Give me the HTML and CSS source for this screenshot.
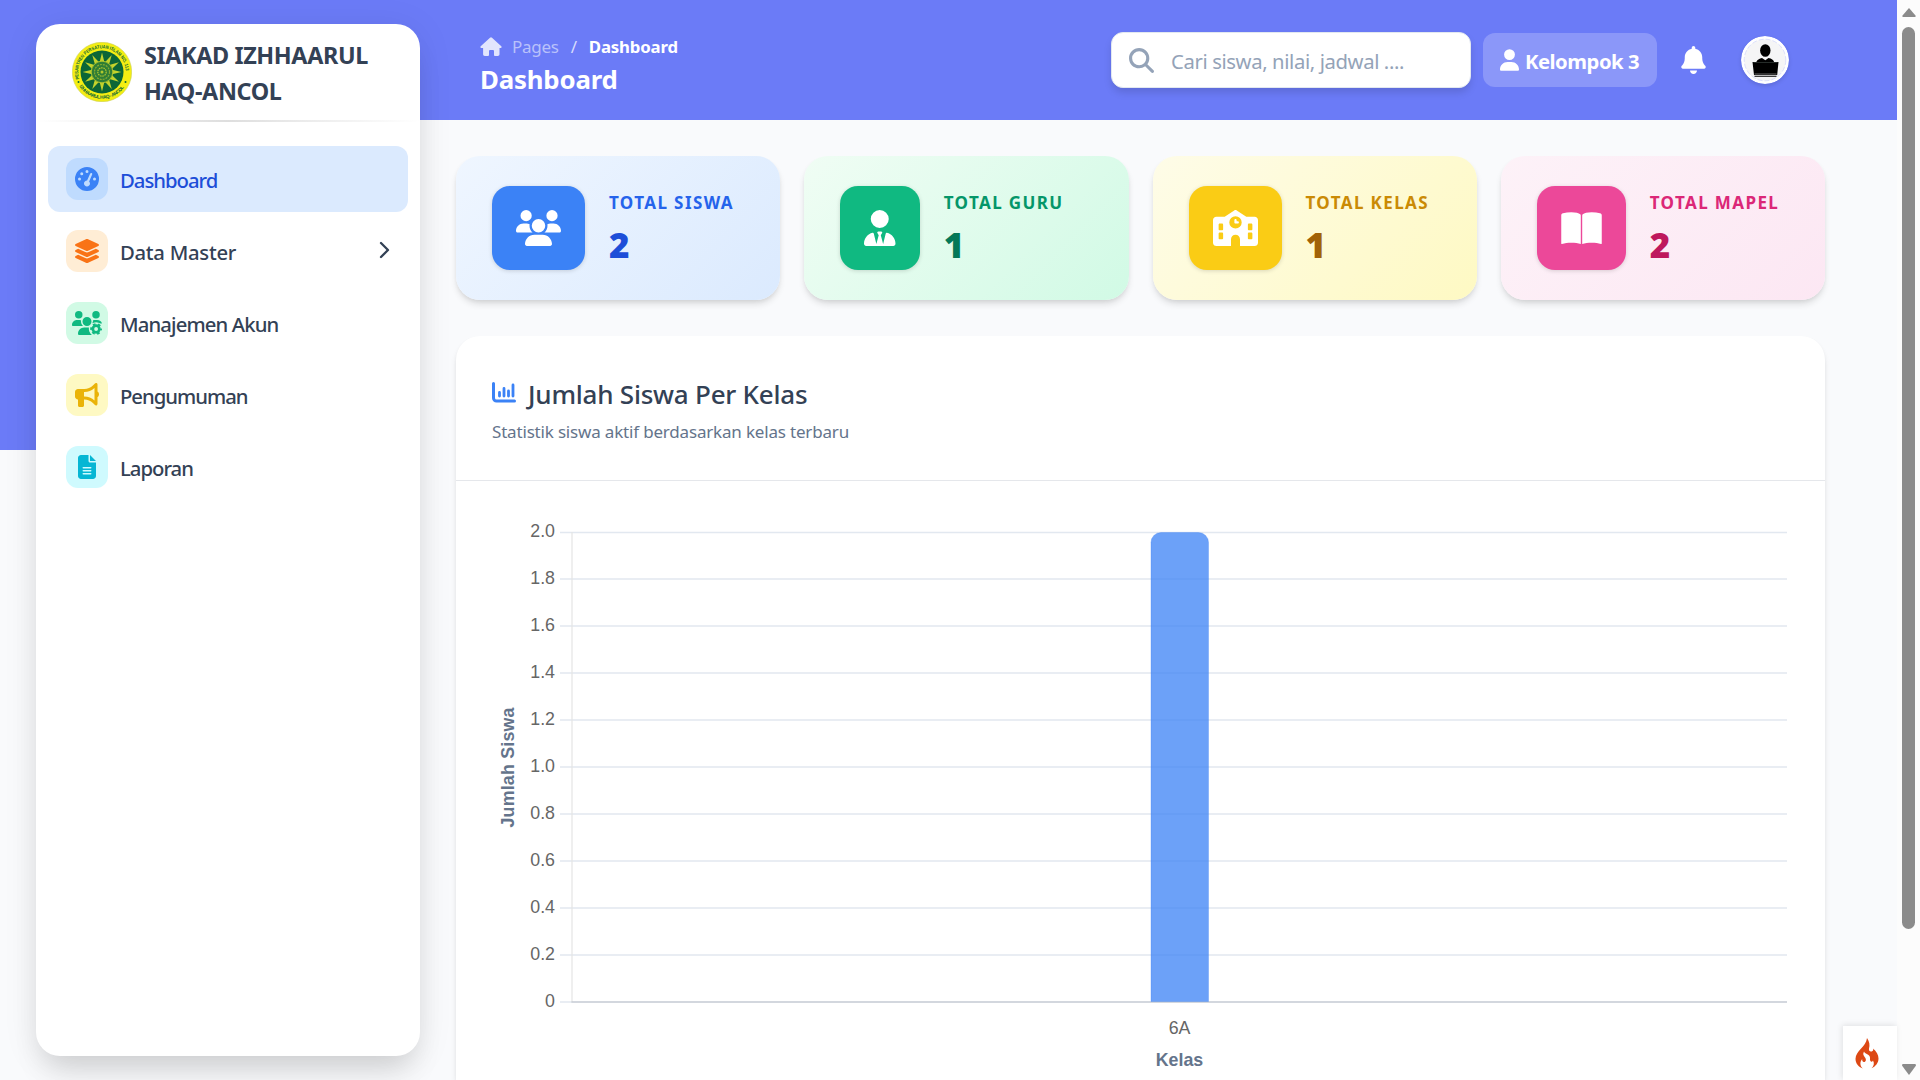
FILE: index.html
```html
<!DOCTYPE html>
<html lang="id">
<head>
<meta charset="utf-8">
<title>Dashboard</title>
<link rel="stylesheet" href="styles.css">
</head>
<body>
<div class="app">
  <aside class="sidebar">
    <div class="brand">
      <svg class="brand-logo" viewBox="0 0 60 60">
        <defs>
          <path id="ringTop" d="M7.2 37A23.8 23.8 0 1 1 52.8 37"/>
          <path id="ringBottom" d="M5.8 41.5A26.8 26.8 0 0 0 54.2 41.5"/>
        </defs>
        <circle cx="30" cy="30" r="29.7" fill="#f4ee12" stroke="#c9cf5a" stroke-width=".6"/>
        <circle cx="30" cy="30" r="21.5" fill="#0b6637"/>
        <g fill="#c3d32c">
          <path d="M30 10.5l2.6 10.5h-5.2zM30 49.500l2.600-10.500h-5.200zM10.500 30l10.500-2.600v5.200zM49.500 30l-10.500-2.600v5.200z"/>
          <path transform="rotate(30 30 30)" d="M30 10.500l2.600 10.500h-5.200zM30 49.500l2.600-10.500h-5.200zM10.500 30l10.500-2.600v5.200zM49.500 30l-10.500-2.600v5.200z"/>
          <path transform="rotate(60 30 30)" d="M30 10.500l2.600 10.500h-5.200zM30 49.500l2.600-10.500h-5.200zM10.500 30l10.500-2.600v5.200zM49.500 30l-10.500-2.600v5.200z"/>
        </g>
        <circle cx="30" cy="30" r="10.800" fill="#2f7d35" stroke="#a9c22e" stroke-width="1"/>
        <circle cx="30" cy="30" r="7.500" fill="none" stroke="#86ab30" stroke-width="1.200" stroke-dasharray="2 1"/>
        <circle cx="30" cy="30" r="4.200" fill="none" stroke="#b4c82e" stroke-width="1.200" stroke-dasharray="1.500 .8"/>
        <circle cx="30" cy="30" r="1.500" fill="#b4c82e"/>
        <circle cx="6.500" cy="40" r="1" fill="#0b6637"/><circle cx="53.500" cy="40" r="1" fill="#0b6637"/>
        <text class="ring-text"><textPath href="#ringTop" textLength="80" lengthAdjust="spacingAndGlyphs">PESANTREN PERSATUAN ISLAM NO. 113</textPath></text>
        <text class="ring-text"><textPath href="#ringBottom" startOffset="3" textLength="53">IZHHAARUL HAQ - ANCOL</textPath></text>
      </svg>
      <div class="brand-name">SIAKAD IZHHAARUL<br>HAQ-ANCOL</div>
    </div>
    <div class="divider"></div>
    <nav class="menu">
      <a class="item active"><span class="chip blue"><svg width="24" height="24" viewBox="0 0 512 512"><path d="M0 256a256 256 0 1 1 512 0A256 256 0 1 1 0 256zM288 96a32 32 0 1 0 -64 0 32 32 0 1 0 64 0zM256 416c35.300 0 64-28.700 64-64c0-17.400-6.900-33.100-18.100-44.600L366 161.700c5.300-12.100-.2-26.300-12.300-31.600s-26.300 .2-31.600 12.300L257.900 288c-.6 0-1.300 0-1.900 0c-35.300 0-64 28.700-64 64s28.700 64 64 64zM176 144a32 32 0 1 0 -64 0 32 32 0 1 0 64 0zM96 288a32 32 0 1 0 0-64 32 32 0 1 0 0 64zm352-32a32 32 0 1 0 -64 0 32 32 0 1 0 64 0z"/></svg></span><span class="label">Dashboard</span></a>
      <a class="item"><span class="chip orange"><svg width="24" height="24" viewBox="32 0 512 512"><path d="M264.500 5.200c14.900-6.900 32.100-6.900 47 0l218.600 101c8.500 3.900 13.900 12.400 13.900 21.800s-5.400 17.900-13.900 21.800l-218.600 101c-14.900 6.900-32.100 6.900-47 0L45.900 149.800C37.400 145.800 32 137.300 32 128s5.400-17.900 13.900-21.800L264.500 5.200zM476.900 209.600l53.200 24.600c8.500 3.900 13.900 12.400 13.900 21.800s-5.400 17.900-13.900 21.800l-218.600 101c-14.900 6.900-32.100 6.900-47 0L45.900 277.800C37.400 273.800 32 265.300 32 256s5.400-17.900 13.900-21.800l53.200-24.600 152 70.200c23.400 10.800 50.400 10.800 73.800 0l152-70.200zm-152 198.200l152-70.200 53.200 24.600c8.500 3.900 13.900 12.400 13.900 21.800s-5.400 17.900-13.900 21.800l-218.600 101c-14.900 6.900-32.100 6.900-47 0L45.900 405.800C37.400 401.800 32 393.300 32 384s5.400-17.900 13.900-21.800l53.200-24.600 152 70.200c23.400 10.800 50.400 10.800 73.800 0z"/></svg></span><span class="label label-wide">Data Master</span><svg class="chevron" width="12" height="18" viewBox="0 0 12 18"><path d="M2 2l7 7-7 7"/></svg></a>
      <a class="item"><span class="chip green"><svg width="30" height="24" viewBox="0 0 640 512"><path d="M144 0a80 80 0 1 1 0 160A80 80 0 1 1 144 0zM512 0a80 80 0 1 1 0 160A80 80 0 1 1 512 0zM0 298.700C0 239.800 47.800 192 106.700 192h42.700c15.900 0 31 3.500 44.600 9.700c-1.300 7.200-1.900 14.700-1.900 22.300c0 38.200 16.800 72.500 43.300 96H21.300C9.600 320 0 310.400 0 298.700zM446 201.700c13.600-6.300 28.700-9.700 44.600-9.700h42.700C592.200 192 630 225 640 265L430 262C447 240 448 224 446 201.700zM224 224a96 96 0 1 1 192 0 96 96 0 1 1 -192 0zM128 485.300C128 411.700 187.700 352 261.300 352H360C352 410 375 470 425 512H154.700c-14.700 0-26.700-11.900-26.700-26.700z"/><circle class="gear-gap" cx="514" cy="384" r="142"/><circle class="gear-body" cx="514" cy="384" r="70"/><circle class="gear-teeth" cx="514" cy="384" r="105"/></svg></span><span class="label label-mid">Manajemen Akun</span></a>
      <a class="item"><span class="chip yellow"><svg width="24" height="24" viewBox="0 0 512 512"><path d="M480 32c0-12.900-7.800-24.600-19.800-29.600s-25.700-2.200-34.900 6.900L381.700 53c-48 48-113.100 75-181 75H192 160 64c-35.300 0-64 28.700-64 64v96c0 35.300 28.700 64 64 64l0 128c0 17.700 14.300 32 32 32h64c17.700 0 32-14.300 32-32V352l8.700 0c67.900 0 133 27 181 75l43.600 43.600c9.200 9.200 22.900 11.900 34.900 6.900s19.800-16.600 19.800-29.600V300.400c18.600-8.800 32-32.500 32-60.400s-13.400-51.600-32-60.400V32zm-64 76.700V240 371.300C357.200 317.800 280.500 288 200.700 288H192V192h8.700c79.800 0 156.500-29.800 215.300-83.300z"/></svg></span><span class="label">Pengumuman</span></a>
      <a class="item"><span class="chip cyan"><svg width="18" height="24" viewBox="0 0 384 512"><path d="M64 0C28.700 0 0 28.700 0 64V448c0 35.300 28.700 64 64 64H320c35.300 0 64-28.700 64-64V160H256c-17.700 0-32-14.300-32-32V0H64zM256 0V128H384L256 0zM112 256H272c8.800 0 16 7.200 16 16s-7.200 16-16 16H112c-8.800 0-16-7.200-16-16s7.200-16 16-16zm0 64H272c8.800 0 16 7.200 16 16s-7.200 16-16 16H112c-8.800 0-16-7.200-16-16s7.200-16 16-16zm0 64H272c8.800 0 16 7.200 16 16s-7.200 16-16 16H112c-8.800 0-16-7.200-16-16s7.200-16 16-16z"/></svg></span><span class="label">Laporan</span></a>
    </nav>
  </aside>

  <main class="main">
    <header class="topbar">
      <div class="heading">
        <div class="crumbs">
          <svg width="22" height="20" viewBox="0 0 22 20"><path d="M10 .8a1.400 1.400 0 0 1 2 0l9.300 8.400c.6.700.2 1.800-.8 1.800h-1v6.300c0 1-.8 1.700-1.700 1.700h-2.600c-.8 0-1.200-.6-1.200-1.300v-3.400c0-.8-.5-1.300-1.300-1.300h-2.400c-.8 0-1.300.5-1.300 1.300v3.400c0 .7-.5 1.300-1.300 1.300H4.800c-1 0-1.700-.7-1.700-1.700V11H1.500C.5 11 .1 9.900.7 9.200z"/></svg>
          <span class="crumb-parent">Pages</span><span class="crumb-sep">/</span><b>Dashboard</b>
        </div>
        <h1>Dashboard</h1>
      </div>
      <div class="search"><svg width="25" height="25" viewBox="0 0 512 512"><path d="M416 208c0 45.900-14.900 88.300-40 122.700L502.600 457.400c12.500 12.500 12.500 32.800 0 45.300s-32.800 12.500-45.300 0L330.700 376c-34.400 25.200-76.800 40-122.700 40C93.100 416 0 322.900 0 208S93.100 0 208 0S416 93.100 416 208zM208 352a144 144 0 1 0 0-288 144 144 0 1 0 0 288z"/></svg><span>Cari siswa, nilai, jadwal ....</span></div>
      <div class="user"><svg width="19" height="22" viewBox="0 0 448 512"><path d="M224 256A128 128 0 1 0 224 0a128 128 0 1 0 0 256zm-45.700 48C79.800 304 0 383.800 0 482.300C0 498.700 13.300 512 29.700 512H418.300c16.400 0 29.700-13.300 29.700-29.700C448 383.800 368.200 304 269.700 304H178.300z"/></svg><span>Kelompok 3</span></div>
      <svg class="bell" width="25" height="28" viewBox="0 0 448 512"><path d="M224 0c-17.700 0-32 14.300-32 32V51.200C119 66 64 130.600 64 208v18.800c0 47-17.300 92.400-48.500 127.600l-7.400 8.300c-8.400 9.400-10.400 22.900-5.300 34.400S19.400 416 32 416H416c12.600 0 24-7.400 29.200-18.900s3.100-25-5.300-34.400l-7.400-8.300C401.300 319.200 384 273.900 384 226.800V208c0-77.400-55-142-128-156.800V32c0-17.700-14.300-32-32-32zm45.300 493.300c12-12 18.700-28.300 18.700-45.300H224 160c0 17 6.700 33.300 18.700 45.300s28.300 18.700 45.300 18.700s33.300-6.700 45.300-18.700z"/></svg>
      <svg class="avatar" width="48" height="48" viewBox="0 0 48 48"><circle cx="24" cy="24" r="24" fill="#fff"/><circle cx="24" cy="24" r="20.800" fill="#f5f5f6" stroke="#d3d8fb" stroke-width=".8" stroke-dasharray="5 2"/><ellipse cx="24.300" cy="14.500" rx="5.200" ry="6.300"/><path d="M15 27c1-3.500 3.500-4.500 6-5l3.300 2.200L27.500 22c3 .5 5 1.500 6 5z"/><path d="M11.500 26h26l-1.300 13H13zM13.500 39.800h22v1h-22z"/><path d="M12.500 26.500h24" stroke="#3f4a45" stroke-width=".6"/><path d="M13.500 38h22" stroke="#aaa" stroke-width=".6"/></svg>
    </header>

    <section class="content">
      <div class="stats">
        <article class="stat s-blue"><div class="tile"><svg width="45" height="36" viewBox="0 0 640 512"><path d="M144 0a80 80 0 1 1 0 160A80 80 0 1 1 144 0zM512 0a80 80 0 1 1 0 160A80 80 0 1 1 512 0zM0 298.700C0 239.800 47.800 192 106.700 192h42.700c15.900 0 31 3.500 44.600 9.700c-1.300 7.200-1.900 14.700-1.900 22.300c0 38.200 16.800 72.500 43.300 96c-.2 0-.4 0-.7 0H21.300C9.600 320 0 310.400 0 298.700zM405.300 320c-.2 0-.4 0-.7 0c26.600-23.500 43.300-57.800 43.300-96c0-7.600-.7-15-1.900-22.300c13.600-6.300 28.700-9.700 44.600-9.700h42.700C592.200 192 640 239.800 640 298.700c0 11.800-9.600 21.300-21.300 21.300H405.300zM224 224a96 96 0 1 1 192 0 96 96 0 1 1 -192 0zM128 485.300C128 411.700 187.700 352 261.300 352H378.700C452.300 352 512 411.700 512 485.300c0 14.700-11.900 26.700-26.700 26.700H154.700c-14.700 0-26.700-11.900-26.700-26.700z"/></svg></div><div class="figures"><h2>TOTAL SISWA</h2><p>2</p></div></article>
        <article class="stat s-green"><div class="tile"><svg width="31.500" height="36" viewBox="0 0 448 512"><path d="M96 128a128 128 0 1 0 256 0A128 128 0 1 0 96 128zm94.500 200.200l18.600 31L175.800 483.100l-36-146.900c-2-8.100-9.800-13.400-17.900-11.300C51.900 342.400 0 405.800 0 481.300c0 17 13.800 30.700 30.700 30.700H162.500c0 0 0 0 .1 0H168 280h5.500c0 0 0 0 .1 0H417.300c17 0 30.700-13.800 30.700-30.700c0-75.500-51.900-138.900-121.900-156.400c-8.100-2-15.900 3.300-17.900 11.300l-36 146.900L238.900 359.200l18.600-31c6.400-10.700-1.300-24.200-13.700-24.200H224 204.300c-12.400 0-20.100 13.600-13.700 24.200z"/></svg></div><div class="figures"><h2>TOTAL GURU</h2><p>1</p></div></article>
        <article class="stat s-yellow"><div class="tile"><svg width="45" height="36" viewBox="0 0 640 512"><path fill-rule="evenodd" d="M337.800 5.400C327-1.800 313-1.800 302.200 5.400L166.300 96H48C21.500 96 0 117.500 0 144V464c0 26.500 21.500 48 48 48H256V416c0-35.300 28.700-64 64-64s64 28.700 64 64v96H592c26.500 0 48-21.500 48-48V144c0-26.500-21.500-48-48-48H473.700L337.800 5.400zM96 192h32c8.800 0 16 7.200 16 16v64c0 8.800-7.200 16-16 16H96c-8.800 0-16-7.200-16-16V208c0-8.800 7.200-16 16-16zm400 16c0-8.800 7.200-16 16-16h32c8.800 0 16 7.200 16 16v64c0 8.800-7.200 16-16 16H512c-8.800 0-16-7.200-16-16V208zM96 320h32c8.800 0 16 7.200 16 16v64c0 8.800-7.200 16-16 16H96c-8.800 0-16-7.200-16-16V336c0-8.800 7.200-16 16-16zm400 16c0-8.800 7.200-16 16-16h32c8.800 0 16 7.200 16 16v64c0 8.800-7.200 16-16 16H512c-8.800 0-16-7.200-16-16V336zM232 176a88 88 0 1 1 176 0 88 88 0 1 1 -176 0zm88-48c-8.800 0-16 7.200-16 16v32c0 8.800 7.200 16 16 16h32c8.800 0 16-7.200 16-16s-7.200-16-16-16H336V144c0-8.800-7.200-16-16-16z"/></svg></div><div class="figures"><h2>TOTAL KELAS</h2><p>1</p></div></article>
        <article class="stat s-pink"><div class="tile"><svg width="41" height="36" viewBox="0 0 576 512"><path d="M0 76C0 58 8 52 25 47C60 37 100 32 144 32C205 32 250 44 270 62C276 67 278 72 278 80V484C240 470 195 464 144 464C90 464 50 472 10 482C3 484 0 482 0 476zM576 76C576 58 568 52 551 47C516 37 476 32 432 32C371 32 326 44 306 62C300 67 298 72 298 80V484C336 470 381 464 432 464C486 464 526 472 566 482C573 484 576 482 576 476z"/></svg></div><div class="figures"><h2>TOTAL MAPEL</h2><p>2</p></div></article>
      </div>

      <article class="panel">
        <div class="panel-head">
          <div class="panel-title"><svg width="24" height="21" viewBox="0 0 24 21"><path d="M1.500 1.500v14.500a3 3 0 0 0 3 3h18" stroke-width="3"/><path d="M7.500 10.500v3.500M12 6.500v7.500M16.500 9v5M21 3v11" stroke-width="2.800"/></svg><h2>Jumlah Siswa Per Kelas</h2></div>
          <p>Statistik siswa aktif berdasarkan kelas terbaru</p>
        </div>
        <svg class="chart" width="1369" height="599" viewBox="456 481 1369 599">
          <g class="grid"><path d="M560 532.500H1787M560 579H1787M560 626H1787M560 673H1787M560 720H1787M560 767H1787M560 814H1787M560 861H1787M560 908H1787M560 955H1787M560 1002H572"/></g>
          <path d="M572 532V1002" stroke="#e5e5e5" stroke-width="1.200"/>
          <path d="M571.500 1002H1787" stroke="#c5cad3" stroke-width="1.500"/>
          <path class="bar" d="M1151 1001.500V542.500a10 10 0 0 1 10-10h37.500a10 10 0 0 1 10 10v459z"/>
          <g class="ticks">
            <text x="555" y="537">2.0</text><text x="555" y="584">1.8</text><text x="555" y="631">1.6</text><text x="555" y="678">1.4</text><text x="555" y="725">1.2</text><text x="555" y="772">1.0</text><text x="555" y="818.500">0.8</text><text x="555" y="865.500">0.6</text><text x="555" y="912.500">0.4</text><text x="555" y="959.500">0.2</text><text x="555" y="1006.500">0</text>
          </g>
          <text class="tick-x" x="1179.500" y="1034">6A</text>
          <text class="axis" x="1179.500" y="1066">Kelas</text>
          <text class="axis" transform="translate(514 767.500) rotate(-90)" textLength="120">Jumlah Siswa</text>
        </svg>
      </article>
    </section>
  </main>

  <div class="scrollbar"><svg width="14" height="9" viewBox="0 0 14 9"><path d="M7 0l6.500 7.500c.5.800 0 1.500-.8 1.500H1.300C.5 9 0 8.300.5 7.500z"/></svg><div class="thumb"></div><svg width="14" height="11" viewBox="0 0 14 11"><path d="M7 11L.3 2C-.3 1 .3 0 1.300 0h11.400c1 0 1.600 1 1 2z"/></svg></div>
  <div class="debug-tool"><svg width="24" height="31" viewBox="0 0 24 31"><path d="M12 0C14.500 3.500 15 7 14 10.500C13.500 13 15.500 14.500 17.500 13C18.500 12.300 18.300 11 18 10.500C21.500 13 23.500 17 23.500 20.500C23.500 25 20.500 28.500 16.500 30.300C19 28 19.500 25 18 22.500C17.200 24 16 24 15.300 22.800C14.500 21 16 19 13.500 17C11 15 9.500 15.500 9 13.500C7.500 16 8.500 17.500 10 19.500C11.500 21.500 11 24 9 24C7.500 24 7 22.500 7.200 21C4.500 24 5 28 7.800 30.500C3.500 29 .5 25.500 .5 20.800C.5 12.500 11 9.500 12 0z"/></svg></div>
</div>
</body>
</html>
```
FILE: styles.css
```css
* { box-sizing: border-box; margin: 0; }

body {
  height: 1080px;
  overflow: hidden;
  font-family: "Noto Sans", "Open Sans", sans-serif;
  color: #334155;
  background: #f9fafc;
}

.app {
  display: flex;
  height: 1080px;
  background:
    linear-gradient(#6b7bf7, #6b7bf7) 0 0 / 100% 120px no-repeat,
    linear-gradient(#6b7bf7, #6b7bf7) 0 0 / 240px 450px no-repeat,
    #f9fafc;
}

/* Sidebar */
.sidebar {
  flex: none;
  width: 384px;
  height: 1032px;
  margin: 24px 0 0 36px;
  border-radius: 24px;
  background: #fff;
  box-shadow: 0 4px 36px rgba(0, 0, 0, .08), 0 22px 30px -8px rgba(0, 0, 0, .13);
}
.brand { display: flex; align-items: flex-start; height: 96px; padding: 0 0 0 36px; }
.brand-logo { width: 60px; height: 60px; margin: 18px 12px 0 0; }
.ring-text { font: bold 4.800px "Liberation Sans", sans-serif; fill: #0b6637; }
.brand-name { padding-top: 13px; font-size: 23.400px; line-height: 36px; font-weight: 700; letter-spacing: -.38px; white-space: nowrap; }
.divider { height: 2px; background: linear-gradient(90deg, transparent, #dedede 50%, transparent); }
.menu { display: flex; flex-direction: column; gap: 6px; padding: 24px 12px; }
.item { display: flex; align-items: center; height: 66px; padding: 0 18px; border-radius: 12px; font-size: 20.300px; font-weight: 500; }
.label { padding-top: 2px; letter-spacing: -1px; white-space: nowrap; }
.label-mid { letter-spacing: -.87px; }
.label-wide { letter-spacing: -.28px; }
.active { background: #dbeafe; color: #1d4ed8; }
.chip { display: flex; align-items: center; justify-content: center; width: 42px; height: 42px; margin-right: 12px; border-radius: 12px; fill: currentColor; }
.chip.blue { background: #bfdbfe; color: #3b82f6; }
.chip.orange { background: #ffedd5; color: #f97316; }
.chip.green { background: #d1fae5; color: #10b981; }
.chip.yellow { background: #fef9c3; color: #eab308; }
.chip.cyan { background: #cffafe; color: #06b6d4; }
.gear-gap { fill: #d1fae5; }
.gear-body { fill: none; stroke: currentColor; stroke-width: 58; }
.gear-teeth { fill: none; stroke: currentColor; stroke-width: 42; stroke-dasharray: 55 55; stroke-dashoffset: 27; }
.chevron { margin: 0 -1px 0 auto; transform: translateY(-1px); fill: none; stroke: #334155; stroke-width: 2.300; stroke-linecap: round; stroke-linejoin: round; }

/* Top bar */
.main { flex: none; width: 1477px; height: 1080px; overflow: hidden; }
.topbar { display: flex; align-items: center; height: 120px; padding-left: 60px; color: #fff; }
.heading { width: 631px; align-self: flex-start; padding-top: 33px; }
.crumbs { display: flex; align-items: center; height: 28px; font-size: 17px; line-height: 28px; letter-spacing: -.25px; }
.crumbs svg { fill: #e2e5fd; margin-right: 10px; }
.crumbs b { font-size: 16.800px; font-weight: 700; letter-spacing: -.17px; }
.crumb-parent { color: #b9c1fb; }
.crumb-sep { margin: 0 12px; color: #d7dbfd; }
h1 { font-size: 25.800px; line-height: 36px; font-weight: 700; letter-spacing: -.18px; }
.search { display: flex; align-items: center; width: 360px; height: 56px; padding-left: 17px; border-radius: 12px; background: #fff; border: 1px solid #e2e8f0; box-shadow: 0 5px 8px -1px rgba(0, 0, 0, .14); color: #94a3b8; font-size: 20.300px; letter-spacing: -.39px; white-space: nowrap; }
.search svg { fill: #94a3b8; margin-right: 17px; }
.search span, .user span { padding-top: 2px; }
.user { display: flex; align-items: center; width: 174px; height: 54px; margin-left: 12px; padding-left: 17px; border-radius: 12px; background: #8b97f9; font-size: 20.300px; font-weight: 700; letter-spacing: -.5px; white-space: nowrap; }
.user svg { fill: #fff; margin-right: 6px; }
.bell { fill: #fff; margin-left: 24px; }
.avatar { margin-left: 35px; border-radius: 50%; box-shadow: 0 2px 4px rgba(0, 0, 0, .12); }

/* Statistic cards */
.content { padding: 36px 72px 0 36px; }
.stats { display: grid; grid-template-columns: repeat(4, 1fr); gap: 24px; }
.stat { display: flex; align-items: center; gap: 24px; height: 144px; padding: 0 36px; border-radius: 24px; box-shadow: 0 5px 7px -1px rgba(0, 0, 0, .12), 0 2px 5px -2px rgba(0, 0, 0, .1); }
.tile { display: flex; padding: 24px; border-radius: 18px; fill: #fff; box-shadow: 0 1px 4px rgba(0, 0, 0, .15); }
.tile svg { display: block; }
.stat h2 { font-size: 17px; line-height: 24px; font-weight: 700; letter-spacing: 1.400px; white-space: nowrap; }
.stat p { margin-top: 10px; font-size: 35px; line-height: 40px; font-weight: 900; }
.s-blue { background: linear-gradient(135deg, #eff6ff, #dbeafe); }
.s-blue .tile { background: #3b82f6; }
.s-blue h2 { color: #2563eb; }
.s-blue p { color: #1d4ed8; }
.s-green { background: linear-gradient(135deg, #f0fdf4, #d1fae5); }
.s-green .tile { background: #10b981; }
.s-green h2 { color: #059669; }
.s-green p { color: #047857; }
.s-yellow { background: linear-gradient(135deg, #fefce8, #fef9c3); }
.s-yellow .tile { background: #facc15; }
.s-yellow h2 { color: #ca8a04; }
.s-yellow p { color: #a16207; }
.s-pink { background: linear-gradient(135deg, #fdf2f8, #fce7f3); }
.s-pink .tile { background: #ec4899; }
.s-pink h2 { color: #db2777; }
.s-pink p { color: #be185d; }

/* Chart panel */
.panel { height: 744px; margin-top: 36px; border-radius: 24px 24px 0 0; background: #fff; box-shadow: 0 5px 7px -1px rgba(0, 0, 0, .1), 0 2px 5px -2px rgba(0, 0, 0, .1); }
.panel-head { height: 145px; padding: 36px 36px 0; border-bottom: 1px solid #e5e7eb; }
.panel-title { display: flex; align-items: center; gap: 12px; height: 44px; }
.panel-title svg { fill: none; stroke: #3b82f6; stroke-linecap: round; margin-top: -3px; }
.panel-title h2 { font-size: 26px; line-height: 44px; font-weight: 500; letter-spacing: -.23px; white-space: nowrap; }
.panel-head p { margin-top: 3px; font-size: 17px; line-height: 26px; letter-spacing: -.18px; color: #64748b; white-space: nowrap; }
.chart { display: block; font-family: "Liberation Sans", Arial, sans-serif; font-size: 17.800px; }
.grid { fill: none; stroke: #e2e8f0; stroke-width: 1.500; }
.ticks { text-anchor: end; fill: #666; }
.tick-x { text-anchor: middle; fill: #666; }
.axis { text-anchor: middle; font-weight: 700; fill: #64748b; }
.bar { fill: rgba(59, 130, 246, .75); stroke: rgba(59, 130, 246, .3); stroke-width: 1; }

/* Window chrome and floating button */
.scrollbar { display: flex; flex-direction: column; align-items: center; flex: none; width: 23px; padding: 8px 0 5px; background: #fcfcfc; fill: #8b8b8b; }
.thumb { width: 13px; height: 902px; margin: 10px 0 auto; border-radius: 7px; background: #8b8b8b; }
.debug-tool { position: fixed; right: 23px; bottom: 0; display: flex; justify-content: center; width: 54px; height: 54px; padding: 12px 6px 0 0; background: #fff; box-shadow: -1px -1px 6px rgba(0, 0, 0, .1); fill: #dd4814; }
```
